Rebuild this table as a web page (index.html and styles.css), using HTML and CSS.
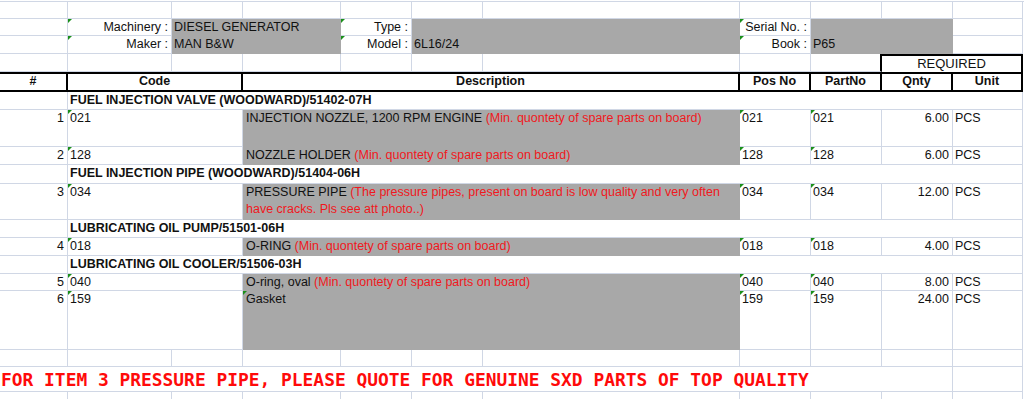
FILE: index.html
```html
<!DOCTYPE html>
<html>
<head>
<meta charset="utf-8">
<link rel="stylesheet" href="styles.css">
</head>
<body>
<div class="sheet">
  <!-- row 1 -->
  <div class="c"></div><div class="c"></div><div class="c"></div><div class="c"></div><div class="c"></div><div class="c"></div><div class="c"></div><div class="c"></div><div class="c"></div><div class="c"></div><div class="c"></div>
  <!-- row 2 -->
  <div class="c"></div>
  <div class="c lbl t">Machinery :</div>
  <div class="c g s2">DIESEL GENERATOR</div>
  <div class="c lbl t">Type :</div>
  <div class="c g s2"></div>
  <div class="c lbl t">Serial No. :</div>
  <div class="c g s2"></div>
  <div class="c"></div>
  <!-- row 3 -->
  <div class="c"></div>
  <div class="c lbl t">Maker :</div>
  <div class="c g s2">MAN B&amp;W</div>
  <div class="c lbl t">Model :</div>
  <div class="c g s2">6L16/24</div>
  <div class="c lbl t">Book :</div>
  <div class="c g s2">P65</div>
  <div class="c"></div>
  <!-- row 4 -->
  <div class="c"></div><div class="c"></div><div class="c"></div><div class="c"></div><div class="c"></div><div class="c"></div><div class="c"></div><div class="c"></div>
  <div class="c req-edge"></div>
  <div class="c s2 req">REQUIRED</div>
  <!-- header -->
  <div class="c h">#</div>
  <div class="c h s2">Code</div>
  <div class="c h s4">Description</div>
  <div class="c h">Pos No</div>
  <div class="c h">PartNo</div>
  <div class="c h">Qnty</div>
  <div class="c h">Unit</div>
  <!-- section -->
  <div class="c"></div>
  <div class="c sec s10">FUEL INJECTION VALVE (WOODWARD)/51402-07H</div>
  <!-- item 1 -->
  <div class="c num">1</div>
  <div class="c s2 t">021</div>
  <div class="c g s4 d">INJECTION NOZZLE, 1200 RPM ENGINE <span class="note">(Min. quontety of spare parts on board)</span></div>
  <div class="c t">021</div>
  <div class="c t">021</div>
  <div class="c num">6.00</div>
  <div class="c">PCS</div>
  <!-- item 2 -->
  <div class="c num">2</div>
  <div class="c s2 t">128</div>
  <div class="c g s4 d">NOZZLE HOLDER <span class="note">(Min. quontety of spare parts on board)</span></div>
  <div class="c t">128</div>
  <div class="c t">128</div>
  <div class="c num">6.00</div>
  <div class="c">PCS</div>
  <!-- section -->
  <div class="c"></div>
  <div class="c sec s10">FUEL INJECTION PIPE (WOODWARD)/51404-06H</div>
  <!-- item 3 -->
  <div class="c num">3</div>
  <div class="c s2 t">034</div>
  <div class="c g s4 d">PRESSURE PIPE <span class="note">(The pressure pipes, present on board is low quality and very often<br>have cracks. Pls see att photo..)</span></div>
  <div class="c t">034</div>
  <div class="c t">034</div>
  <div class="c num">12.00</div>
  <div class="c">PCS</div>
  <!-- section -->
  <div class="c"></div>
  <div class="c sec s10">LUBRICATING OIL PUMP/51501-06H</div>
  <!-- item 4 -->
  <div class="c num">4</div>
  <div class="c s2 t">018</div>
  <div class="c g s4 d">O-RING <span class="note">(Min. quontety of spare parts on board)</span></div>
  <div class="c t">018</div>
  <div class="c t">018</div>
  <div class="c num">4.00</div>
  <div class="c">PCS</div>
  <!-- section -->
  <div class="c"></div>
  <div class="c sec s10">LUBRICATING OIL COOLER/51506-03H</div>
  <!-- item 5 -->
  <div class="c num">5</div>
  <div class="c s2 t">040</div>
  <div class="c g s4 d">O-ring, oval <span class="note">(Min. quontety of spare parts on board)</span></div>
  <div class="c t">040</div>
  <div class="c t">040</div>
  <div class="c num">8.00</div>
  <div class="c">PCS</div>
  <!-- item 6 -->
  <div class="c num">6</div>
  <div class="c s2 t">159</div>
  <div class="c g s4 d t">Gasket</div>
  <div class="c t">159</div>
  <div class="c t">159</div>
  <div class="c num">24.00</div>
  <div class="c">PCS</div>
  <!-- row 16 -->
  <div class="c"></div><div class="c"></div><div class="c"></div><div class="c"></div><div class="c"></div><div class="c"></div><div class="c"></div><div class="c"></div><div class="c"></div><div class="c"></div><div class="c"></div>
  <!-- row 17 -->
  <div class="c s9 remark">FOR ITEM 3 PRESSURE PIPE, PLEASE QUOTE FOR GENUINE SXD PARTS OF TOP QUALITY</div>
  <div class="c"></div><div class="c"></div>
  <!-- row 18 -->
  <div class="c"></div><div class="c"></div><div class="c"></div><div class="c"></div><div class="c"></div><div class="c"></div><div class="c"></div><div class="c"></div><div class="c"></div><div class="c"></div><div class="c"></div>
</div>
</body>
</html>
```

FILE: styles.css
```css
html, body {
  margin: 0;
  padding: 0;
  background: #ffffff;
}

body {
  padding-top: 1px;
  font-family: "Liberation Sans", Arial, sans-serif;
  font-size: 12.5px;
  color: #111111;
}

.sheet {
  display: grid;
  grid-template-columns: 68px 104px 71px 98px 71px 71px 257px 71px 71px 71px 70px;
  grid-template-rows: 17px 17px 18px 18px 20px 18px 37px 18px 19px 36px 18px 18px 18px 17px 59px 17px 25px 18px;
  border-top: 1px solid #d0d7e5;
  width: 1024px;
  overflow: hidden;
}

.c {
  position: relative;
  box-sizing: border-box;
  border-right: 1px solid #d0d7e5;
  border-bottom: 1px solid #d0d7e5;
  padding: 0 2px;
  line-height: 17px;
  white-space: nowrap;
  min-width: 0;
}

.s2 { grid-column: span 2; }
.s4 { grid-column: span 4; }
.s9 { grid-column: span 9; }
.s10 { grid-column: span 10; }

.g {
  background: #a8a8a8;
  border-color: #a8a8a8;
}

.lbl {
  text-align: right;
  padding-right: 3px;
}

.num {
  text-align: right;
  padding-right: 3px;
}

.d {
  white-space: normal;
  padding-left: 3px;
}

.note {
  color: #f01820;
}

.t::before {
  content: "";
  position: absolute;
  left: 0;
  top: 0;
  width: 0;
  height: 0;
  border-top: 4px solid #1a8f1a;
  border-right: 4px solid transparent;
}

.sec {
  font-weight: bold;
  padding-left: 2px;
}

.h {
  font-weight: bold;
  text-align: center;
  border-top: 2px solid #000000;
  border-bottom: 2px solid #000000;
  border-right: 2px solid #000000;
  line-height: 15px;
}

.req-edge {
  border-right: 2px solid #000000;
}

.req {
  text-align: center;
  font-size: 13px;
  border-top: 2px solid #000000;
  border-right: 2px solid #000000;
  border-bottom: none;
  line-height: 16px;
}

.remark {
  padding-left: 1px;
  font-family: "DejaVu Sans Mono", "Liberation Mono", monospace;
  font-weight: bold;
  font-size: 17.9px;
  line-height: 26px;
  color: #ff0a0a;
  border-right: none;
  overflow: visible;
}
```
